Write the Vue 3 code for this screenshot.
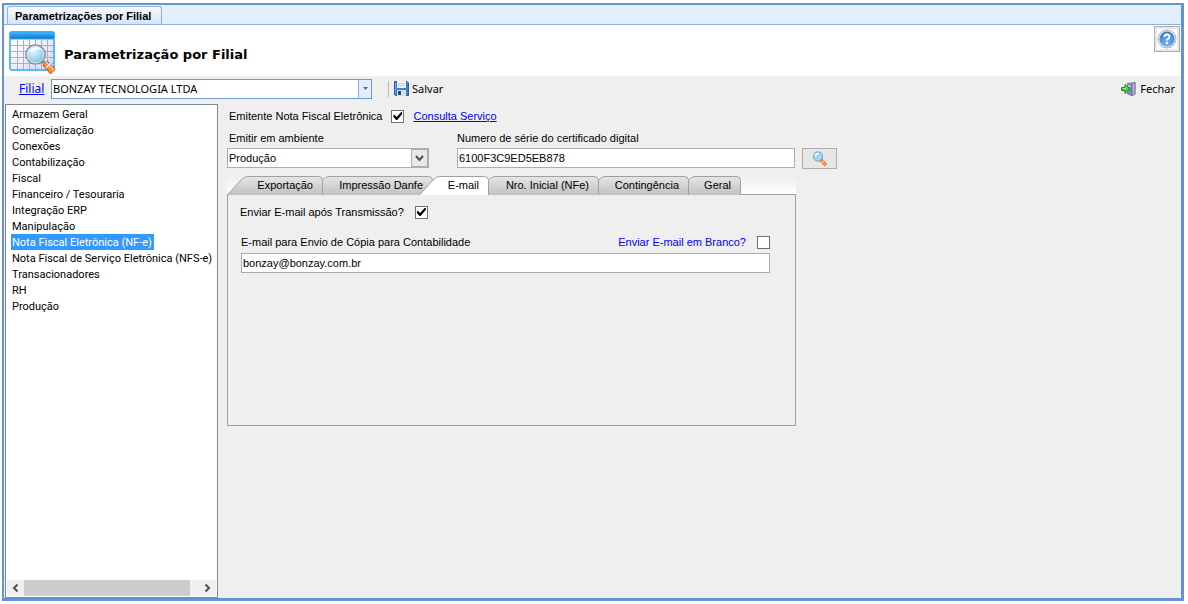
<script setup>
import { ref } from 'vue'

const pageTabs = ['Parametrizações por Filial']
const branch = ref('BONZAY TECNOLOGIA LTDA')
const issuer = ref(true)
const environment = ref('Produção')
const serial = ref('6100F3C9ED5EB878')
const sendAfter = ref(true)
const sendBlank = ref(false)
const email = ref('bonzay@bonzay.com.br')

const sections = [
  'Armazem Geral',
  'Comercialização',
  'Conexões',
  'Contabilização',
  'Fiscal',
  'Financeiro / Tesouraria',
  'Integração ERP',
  'Manipulação',
  'Nota Fiscal Eletrônica (NF-e)',
  'Nota Fiscal de Serviço Eletrônica (NFS-e)',
  'Transacionadores',
  'RH',
  'Produção'
]
const selected = ref('Nota Fiscal Eletrônica (NF-e)')

const tabs = [
  { name: 'Exportação', width: 96, slanted: true },
  { name: 'Impressão Danfe', width: 110 },
  { name: 'E-mail', width: 70, slanted: true, active: true },
  { name: 'Nro. Inicial (NFe)', width: 110 },
  { name: 'Contingência', width: 90 },
  { name: 'Geral', width: 52 }
]

function outline(tab) {
  const right = tab.width - 0.5
  const start = tab.slanted ? 'M0.5 19 L14 4 Q17 0.5 21 0.5' : 'M-0.5 19 V4.5 Q2 0.5 6 0.5'
  return `${start} H${right - 4} Q${right} 0.5 ${right} 4.5 V19`
}
</script>

<template>
  <div class="window">
    <nav class="page-tabs">
      <button v-for="tab in pageTabs" :key="tab" type="button" class="page-tab">{{ tab }}</button>
    </nav>

    <header class="header">
      <svg class="header-icon" width="48" height="44" viewBox="0 0 48 44" aria-hidden="true">
        <defs>
          <linearGradient id="bar" x1="0" y1="0" x2="0" y2="1">
            <stop offset="0" stop-color="#4cc0fc" />
            <stop offset="0.4" stop-color="#2a9bea" />
            <stop offset="1" stop-color="#1276cf" />
          </linearGradient>
          <linearGradient id="sheet" x1="0" y1="0" x2="1" y2="1">
            <stop offset="0.2" stop-color="#ffffff" />
            <stop offset="1" stop-color="#d0d0f6" />
          </linearGradient>
          <radialGradient id="lens" cx="0.4" cy="0.3" r="0.8">
            <stop offset="0" stop-color="#e6f8ff" />
            <stop offset="0.6" stop-color="#9bd3ef" />
            <stop offset="1" stop-color="#5ba9d6" />
          </radialGradient>
        </defs>
        <rect x="1" y="1" width="44" height="38" rx="2" fill="url(#sheet)" />
        <path d="M2 14.500H45M2 20.500H45M2 26.500H45M2 32.500H45M8.500 9V39M14.500 9V39M20.500 9V39M26.500 9V39M32.500 9V39M38.500 9V39" stroke="#b0b0bd" />
        <rect x="1" y="1" width="44" height="38" rx="2" fill="none" stroke="#2aacf8" stroke-width="1.500" />
        <rect x="1" y="1" width="44" height="7" rx="1" fill="url(#bar)" stroke="#20a6f8" />
        <path d="M33 30L38 34" stroke="#8c98a6" stroke-width="4" />
        <path d="M36 32L44 41" stroke="#c2521c" stroke-width="7" />
        <path d="M36 32L44 41" stroke="#f58b32" stroke-width="5" />
        <path d="M37 31L45 39" stroke="#ffd09c" stroke-width="1.500" />
        <path d="M37 37L42 32" stroke="#f4e9df" stroke-width="1.500" />
        <circle cx="26.500" cy="23.500" r="9.500" fill="url(#lens)" stroke="#82919d" stroke-width="1.500" />
        <circle cx="26.500" cy="23.500" r="8.300" fill="none" stroke="#d9edf6" />
        <path d="M20 22Q21 16 27 16Q31 16 32 19Q27 18 20 22Z" fill="#f4fcff" opacity="0.8" />
      </svg>
      <h1>Parametrização por Filial</h1>
      <button type="button" class="help" aria-label="Ajuda">
        <svg width="20" height="20" viewBox="0 0 20 20" aria-hidden="true">
          <defs>
            <radialGradient id="help-blue" cx="0.5" cy="0.8" r="0.8">
              <stop offset="0" stop-color="#79b8f4" />
              <stop offset="1" stop-color="#3578cd" />
            </radialGradient>
          </defs>
          <rect width="20" height="20" fill="#fff" />
          <circle cx="10" cy="10" r="9" fill="#e2e6eb" stroke="#a9b2bc" />
          <circle cx="10" cy="10" r="7.500" fill="url(#help-blue)" />
          <path d="M7.500 8Q7.500 5.500 10 5.500Q12.500 5.500 12.500 7.700Q12.500 9 11 9.800Q10 10.400 10 11.500M10 13V15" fill="none" stroke="#fff" stroke-width="1.900" />
        </svg>
      </button>
    </header>

    <div class="toolbar">
      <a href="#filial" class="branch-link">Filial</a>
      <div class="combo branch">
        <input id="filial" v-model="branch" type="text" aria-label="Filial" />
        <button type="button" aria-label="Abrir lista de filiais">
          <svg width="5" height="3" viewBox="0 0 5 3" aria-hidden="true"><path d="M0 0H5L2.500 3Z" fill="#527192" /></svg>
        </button>
      </div>
      <span class="separator"></span>
      <button type="button" class="tool">
        <svg width="15" height="15" viewBox="0 0 15 15" aria-hidden="true">
          <path d="M0.500 0.500H13L14.500 2V14.500H1.500L0.500 13.500Z" fill="#3b82c8" stroke="#245c9f" />
          <rect x="3" y="0" width="9" height="7" fill="#eef4fa" />
          <path d="M4 2.500H11M4 4.500H11" stroke="#c3d2e2" />
          <rect x="3" y="9" width="9" height="6" fill="#d8dee5" />
          <rect x="4" y="10" width="3" height="4" fill="#34465b" />
          <path d="M1.500 2V12" stroke="#6fa9e2" />
        </svg>
        Salvar
      </button>
      <button type="button" class="tool close">
        <svg width="16" height="16" viewBox="0 0 16 16" aria-hidden="true">
          <path d="M6 2L13 1H14.500V13L11 15L6 13Z" fill="#8a8eb1" />
          <path d="M6 2L11 3V15L6 13Z" fill="#8286b0" />
          <path d="M11 3L14 1.500V13L11 15Z" fill="#b4b7d1" stroke="#5c6086" stroke-width="0.700" />
          <path d="M7 4L10 4.500V6L7 5.500Z" fill="#c8cce4" />
          <path d="M0.700 6.500H4V3.500L9 8L4 12.500V9.500H0.700Z" fill="#4ed23c" stroke="#17851c" />
          <path d="M2 7.500H5V6" fill="none" stroke="#a7f38b" />
        </svg>
        Fechar
      </button>
    </div>

    <main class="body">
      <aside class="sidebar">
        <ul>
          <li v-for="item in sections" :key="item">
            <button type="button" :class="{ selected: item === selected }" @click="selected = item">{{ item }}</button>
          </li>
        </ul>
        <div class="scrollbar">
          <button type="button" aria-label="Rolar para a esquerda">
            <svg width="7" height="8" viewBox="0 0 7 8" aria-hidden="true"><path d="M5.500 0.500L2 4L5.500 7.500" fill="none" stroke="#505050" stroke-width="2" /></svg>
          </button>
          <span class="track"><span class="thumb"></span></span>
          <button type="button" aria-label="Rolar para a direita">
            <svg width="7" height="8" viewBox="0 0 7 8" aria-hidden="true"><path d="M1.500 0.500L5 4L1.500 7.500" fill="none" stroke="#505050" stroke-width="2" /></svg>
          </button>
        </div>
      </aside>

      <section class="content">
        <div class="issuer">
          <label for="issuer">Emitente Nota Fiscal Eletrônica</label>
          <input id="issuer" v-model="issuer" type="checkbox" />
          <a href="#consulta">Consulta Serviço</a>
        </div>

        <div class="fields">
          <div class="field environment">
            <label for="environment">Emitir em ambiente</label>
            <div class="select">
              <select id="environment" v-model="environment">
                <option>Produção</option>
                <option>Homologação</option>
              </select>
              <span class="arrow">
                <svg width="9" height="7" viewBox="0 0 9 7" aria-hidden="true"><path d="M1 1L4.500 5L8 1" fill="none" stroke="#505050" stroke-width="2" /></svg>
              </span>
            </div>
          </div>
          <div class="field serial">
            <label for="serial">Numero de série do certificado digital</label>
            <input id="serial" v-model="serial" type="text" />
          </div>
          <button type="button" class="search" aria-label="Pesquisar certificado">
            <svg width="16" height="16" viewBox="0 0 16 16" aria-hidden="true">
              <path d="M8.500 8.500L14 14" stroke="#cf7135" stroke-width="3.400" />
              <path d="M9.500 9.500L14 14" stroke="#ff9e4c" stroke-width="2" />
              <path d="M10 11.500L11.700 9.800" stroke="#f4e4d5" />
              <circle cx="6" cy="5.500" r="4.600" fill="#9ed8f5" stroke="#7c9cb2" />
              <path d="M3 5Q4 2 7 2.500" fill="none" stroke="#effbff" stroke-width="1.500" />
            </svg>
          </button>
        </div>

        <div class="tab-box">
          <div class="tabs" role="tablist">
            <button
              v-for="tab in tabs"
              :key="tab.name"
              type="button"
              role="tab"
              class="tab"
              :class="{ active: tab.active }"
              :aria-selected="!!tab.active"
              :style="{ width: tab.width + 'px' }"
            >
              <svg :width="tab.width" height="19" :viewBox="`0 0 ${tab.width} 19`" aria-hidden="true">
                <defs>
                  <linearGradient id="tab-grey" x1="0" y1="0" x2="0" y2="1">
                    <stop offset="0" stop-color="#e6e6e6" />
                    <stop offset="1" stop-color="#c1c1c1" />
                  </linearGradient>
                </defs>
                <path :d="outline(tab)" :fill="tab.active ? '#fff' : 'url(#tab-grey)'" stroke="#a0a0a0" />
              </svg>
              <span>{{ tab.name }}</span>
            </button>
          </div>
          <div class="panel" role="tabpanel">
            <div class="check-row">
              <label for="send-after">Enviar E-mail após Transmissão?</label>
              <input id="send-after" v-model="sendAfter" type="checkbox" />
            </div>
            <div class="email-head">
              <label for="email">E-mail para Envio de Cópia para Contabilidade</label>
              <div class="check-row blank">
                <label for="send-blank">Enviar E-mail em Branco?</label>
                <input id="send-blank" v-model="sendBlank" type="checkbox" />
              </div>
            </div>
            <input id="email" v-model="email" type="text" class="email" />
          </div>
        </div>
      </section>
    </main>
  </div>
</template>

<style>
body {
  background: #fff;
}
</style>

<style scoped>
.window,
.window * {
  box-sizing: border-box;
}
.window {
  display: flex;
  flex-direction: column;
  height: calc(100vh - 6px);
  margin: 3px 4px 3px 2px;
  border: 2px solid #6593cf;
  border-right-width: 3px;
  border-bottom-width: 3px;
  background: #efefef;
  color: #000;
  font-family: "Liberation Sans", Arial, sans-serif;
  font-size: 11px;
  line-height: 16px;
}
button,
input,
select {
  margin: 0;
  padding: 0;
  border: 0;
  border-radius: 0;
  background: none;
  color: inherit;
  font: inherit;
}
svg {
  display: block;
  flex: none;
}
a {
  color: #00f;
}
.page-tabs {
  flex: none;
  display: flex;
  align-items: flex-end;
  height: 20px;
  padding-left: 3px;
  border-bottom: 1px solid #8db2e3;
  background: #e3efff;
}
.page-tab {
  height: 18px;
  padding: 0 10px 0 7px;
  border: 1px solid #8db2e3;
  border-bottom: 0;
  border-radius: 3px 3px 0 0;
  background: linear-gradient(#f8fbff, #d3e4fa);
  font-weight: bold;
}
.header {
  flex: none;
  display: flex;
  align-items: center;
  height: 51px;
  padding: 0 1px 0 5px;
  background: #fff;
}
.header-icon {
  margin-top: 5px;
}
h1 {
  flex: 1;
  margin: 8px 0 0 7px;
  font: bold 13px/16px "DejaVu Sans", Verdana, sans-serif;
}
.help {
  align-self: flex-start;
  display: grid;
  place-items: center;
  width: 26px;
  height: 26px;
  margin-top: 1px;
  border: 1px solid #adadad;
  background: #e8e8e8;
}
.toolbar {
  flex: none;
  display: flex;
  align-items: center;
  height: 25px;
  padding: 0 6px 0 15px;
  font-family: "Noto Sans", "Segoe UI", sans-serif;
  font-size: 12px;
}
.branch-link {
  width: 32px;
}
.combo {
  display: flex;
  width: 321px;
  height: 20px;
  border: 1px solid #6f9ad3;
  background: #fff;
}
.combo input {
  flex: 1;
  min-width: 0;
  padding-left: 1px;
  font-size: 11px;
}
.combo button {
  display: grid;
  place-items: center;
  width: 13px;
  border-left: 1px solid #8db2e3;
  background: #e3efff;
}
.separator {
  width: 1px;
  height: 16px;
  margin: 0 5px 0 16px;
  background: #b8b8b8;
}
.tool {
  display: flex;
  align-items: center;
  gap: 3px;
  font-size: 11px;
}
.close {
  margin-left: auto;
}
.body {
  flex: 1;
  display: flex;
  min-height: 0;
  padding: 3px 0 0 1px;
}
.sidebar {
  display: flex;
  flex-direction: column;
  width: 213px;
  padding: 1px;
  border: 1px solid #828790;
  background: #fff;
  font-family: Roboto, "Liberation Sans", sans-serif;
}
.sidebar ul {
  flex: 1;
  margin: 0;
  padding: 0 4px;
  list-style: none;
  white-space: nowrap;
}
.sidebar li {
  height: 16px;
}
.sidebar li button {
  display: block;
  height: 16px;
  padding: 1px 2px 0 1px;
  line-height: 15px;
}
.sidebar .selected {
  background: #3399ff;
  color: #fff;
}
.scrollbar {
  display: flex;
  height: 16px;
  background: #f0f0f0;
}
.scrollbar button {
  display: grid;
  place-items: center;
  width: 17px;
}
.track {
  flex: 1;
}
.thumb {
  display: block;
  width: 95%;
  height: 100%;
  background: #cdcdcd;
}
.content {
  flex: 1;
  padding: 3px 9px;
}
.issuer {
  display: flex;
  align-items: center;
  height: 18px;
  padding-left: 2px;
}
.issuer a {
  margin-left: 9px;
}
input[type="checkbox"] {
  appearance: none;
  display: grid;
  place-items: center;
  width: 13px;
  height: 13px;
  margin-left: 9px;
  border: 1px solid #707070;
  background: #fff;
}
input[type="checkbox"]:checked::after {
  content: "";
  width: 9px;
  height: 8px;
  background: #000;
  clip-path: polygon(0 38%, 14% 38%, 36% 64%, 86% 0, 100% 0, 100% 22%, 42% 100%, 30% 100%, 0 64%);
}
.fields {
  display: flex;
  align-items: flex-end;
  margin-top: 5px;
}
.field label {
  display: block;
  height: 18px;
  padding-left: 2px;
}
.serial label {
  padding-left: 0;
}
.environment {
  width: 202px;
  margin-right: 28px;
}
.serial {
  width: 338px;
}
input[type="text"]#serial,
.email {
  display: block;
  width: 100%;
  height: 20px;
  padding: 0 1px;
  border: 1px solid #abadb3;
  background: #fff;
}
.select {
  position: relative;
  height: 20px;
  border: 1px solid #abadb3;
  background: #fff;
}
.select select {
  appearance: none;
  display: block;
  width: 100%;
  height: 18px;
  padding-left: 1px;
}
.arrow {
  position: absolute;
  top: 0;
  right: 0;
  display: grid;
  place-items: center;
  width: 17px;
  height: 18px;
  border: 1px solid #adadad;
  background: #e8e8e8;
  pointer-events: none;
}
.search {
  display: grid;
  place-items: center;
  width: 35px;
  height: 21px;
  margin: 0 0 -1px 7px;
  border: 1px solid #adadad;
  background: #e6e6e6;
}
.tab-box {
  width: 569px;
  margin-top: 8px;
}
.tabs {
  display: flex;
  height: 18px;
  background: linear-gradient(#efefef, #fdfdfd);
}
.tab {
  position: relative;
  display: flex;
  justify-content: flex-end;
  height: 19px;
  padding-right: 10px;
  line-height: 18px;
  white-space: nowrap;
}
.tab svg {
  position: absolute;
  inset: 0;
  overflow: visible;
}
.tab span {
  position: relative;
}
.tab.active {
  z-index: 1;
  margin-left: -14px;
}
.panel {
  height: 232px;
  padding: 9px 25px 0 12px;
  border: 1px solid #a0a0a0;
}
.check-row {
  display: flex;
  align-items: center;
}
.check-row input[type="checkbox"] {
  margin-left: 11px;
}
.email-head {
  display: flex;
  justify-content: space-between;
  margin: 14px 0 3px;
  padding-left: 1px;
}
.blank {
  color: #00f;
}
.panel .email {
  width: calc(100% - 1px);
  margin-left: 1px;
}
</style>
